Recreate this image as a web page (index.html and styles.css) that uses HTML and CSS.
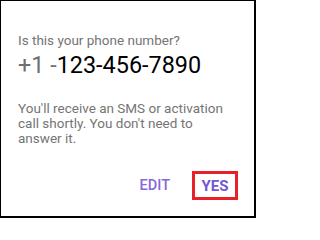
FILE: index.html
```html
<!DOCTYPE html>
<html>
<head>
<meta charset="utf-8">
<link rel="stylesheet" href="styles.css">
</head>
<body>
<div class="dialog">
  <div class="title">Is this your phone number?</div>
  <div class="phone"><span class="cc">+1 -</span><span class="num">123-456-7890</span></div>
  <div class="msg">You'll receive an SMS or activation call shortly. You don't need to answer it.</div>
  <div class="actions">
    <span class="btn edit">EDIT</span>
    <span class="btn yes">YES</span>
  </div>
</div>
</body>
</html>
```
FILE: styles.css
```css
html, body {
  margin: 0;
  padding: 0;
  background: #fff;
}
.dialog {
  box-sizing: border-box;
  width: 256px;
  height: 218px;
  border-style: solid;
  border-color: #000;
  border-width: 1px 2px 2px 1px;
  padding: 31px 16px 0 17px;
  font-family: Roboto, "Liberation Sans", sans-serif;
  display: flex;
  flex-direction: column;
}
.title {
  font-size: 13.5px;
  line-height: 16px;
  color: #757575;
}
.phone {
  margin-top: 3px;
  font-size: 23.4px;
  line-height: 28px;
  white-space: nowrap;
}
.cc {
  color: #6f6f6f;
}
.num {
  color: #000;
}
.msg {
  margin-top: 22px;
  margin-right: 10px;
  font-size: 13.5px;
  line-height: 15px;
  color: #757575;
}
.actions {
  margin-top: 25px;
  display: flex;
  justify-content: flex-end;
  align-items: center;
  gap: 22px;
}
.btn {
  color: #7b5fd9;
  text-transform: uppercase;
}
.edit {
  font-size: 14.5px;
  font-weight: 500;
  color: #8468dc;
}
.yes {
  box-sizing: border-box;
  width: 46px;
  height: 29px;
  border: 3px solid #e8202a;
  font-size: 15px;
  font-weight: 700;
  line-height: 25px;
  text-align: center;
  color: #7456d6;
}
```
